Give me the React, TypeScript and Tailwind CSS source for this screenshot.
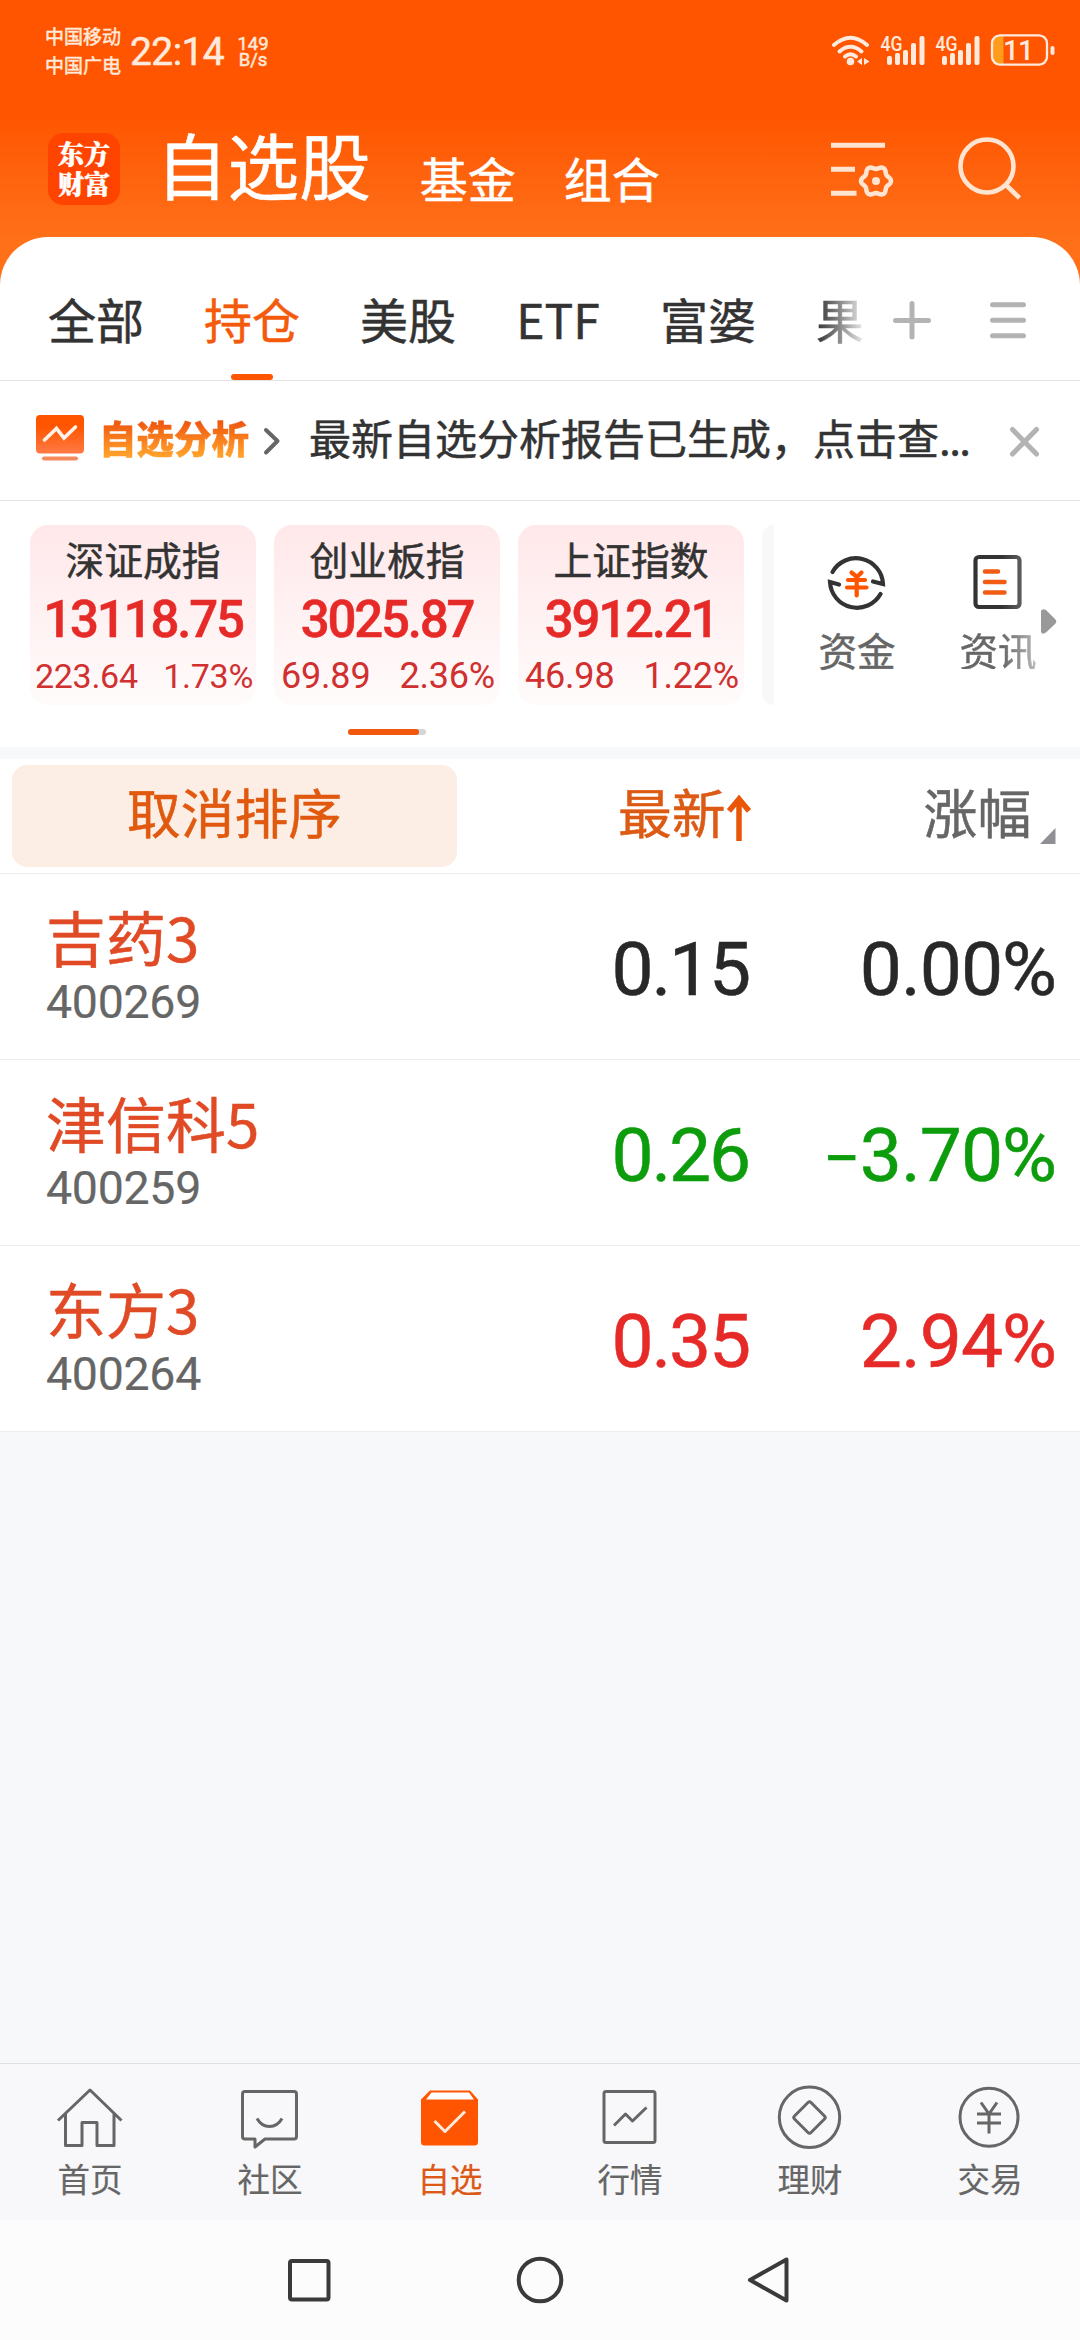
import type { ReactNode } from "react";

interface IndexCard {
  name: string;
  value: string;
  change: string;
  percent: string;
  detailClass: string;
}

interface Stock {
  name: string;
  code: string;
  price: string;
  sign?: string;
  percent: string;
  color: string;
}

interface NavItem {
  label: string;
  icon: ReactNode;
  active?: boolean;
}

const indexes: IndexCard[] = [
  { name: "深证成指", value: "13118.75", change: "223.64", percent: "1.73%", detailClass: "text-[34px] tracking-[-0.3px] pl-[5px] pr-[3px]" },
  { name: "创业板指", value: "3025.87", change: "69.89", percent: "2.36%", detailClass: "text-[36px] tracking-[-0.2px] pl-[7px] pr-[5px]" },
  { name: "上证指数", value: "3912.21", change: "46.98", percent: "1.22%", detailClass: "text-[36px] tracking-[-0.2px] pl-[7px] pr-[5px]" },
];

const stocks: Stock[] = [
  { name: "吉药3", code: "400269", price: "0.15", percent: "0.00%", color: "text-[#282828]" },
  { name: "津信科5", code: "400259", price: "0.26", sign: "−", percent: "3.70%", color: "text-[#0c9c0c]" },
  { name: "东方3", code: "400264", price: "0.35", percent: "2.94%", color: "text-[#e62a28]" },
];

const tabs = ["全部", "持仓", "美股", "ETF", "富婆"];

const navItems: NavItem[] = [
  {
    label: "首页",
    icon: (
      <path d="M4 39.5 L36 9 L67.500 39.500 M11.500 33 V64.500 H28 V41.500 H43 V64.500 H60 V33" />
    ),
  },
  {
    label: "社区",
    icon: (
      <>
        <path d="M11 10.500 H60 Q62.500 10.500 62.500 13 V55.500 Q62.500 58 60 58 H31 L21 66 V58 H11 Q8.500 58 8.500 55.500 V13 Q8.500 10.500 11 10.500 Z" />
        <path d="M23 37.500 Q27.500 45.500 35.500 45.500 T48 37.500" />
      </>
    ),
  },
  {
    label: "自选",
    active: true,
    icon: (
      <>
        <path d="M16 9.500 H56 L64 18.500 V61 Q64 64.500 60.500 64.500 H10.500 Q7 64.500 7 61 V18.500 Z" fill="#ff5500" stroke="none" />
        <path d="M17.500 11.500 H55 L60 18.500 H12 Z" fill="#fff" stroke="none" />
        <path d="M20.500 40 L31 50.500 L51 30.500" stroke="#ffeadd" />
      </>
    ),
  },
  {
    label: "行情",
    icon: (
      <>
        <rect x="10" y="10.500" width="51" height="51" rx="2" />
        <path d="M20 44.500 L31.500 33 L38.500 40 L52.500 26.500" />
      </>
    ),
  },
  {
    label: "理财",
    icon: (
      <>
        <circle cx="35.500" cy="36.300" r="30.200" />
        <path d="M34 21.500 Q35.500 20 37 21.500 L50.500 35 Q52 36.500 50.500 38 L37 51.500 Q35.500 53 34 51.500 L20.500 38 Q19 36.500 20.500 35 Z" />
      </>
    ),
  },
  {
    label: "交易",
    icon: (
      <>
        <circle cx="35" cy="36.300" r="29" />
        <path d="M27 21.500 L35 33 L43 21.500 M35 32 V52.500 M23 33 H47 M23 42 H47" />
      </>
    ),
  },
];

// six-lobed outline of the settings gear
const gearPoints = Array.from({ length: 72 }, (_, i) => {
  const angle = (i * Math.PI) / 36;
  const radius = 13.5 + 1.5 * Math.cos(6 * angle);
  return `${(45 + radius * Math.cos(angle)).toFixed(2)},${(48 + radius * Math.sin(angle)).toFixed(2)}`;
}).join(" ");

function Signal() {
  return (
    <svg width="46" height="32" viewBox="0 0 46 32" fill="#ffeadd">
      <text x="0.500" y="17" fontSize="20" fontWeight="500" textLength="22" lengthAdjust="spacingAndGlyphs">4G</text>
      <rect x="7" y="22" width="5" height="9" rx="2" />
      <rect x="15" y="19" width="5" height="12" rx="2" />
      <rect x="23" y="16" width="5" height="15" rx="2" />
      <rect x="31" y="9" width="5" height="22" rx="2" />
      <rect x="39.500" y="2" width="5" height="29" rx="2" />
    </svg>
  );
}

function StatusBar() {
  return (
    <div className="flex h-[102px] pl-[45px] text-[#ffeadd]">
      <div className="w-[78px] pt-[21px] text-[19px] leading-[29px]">
        <p>中国移动</p>
        <p>中国广电</p>
      </div>
      <p className="ml-[7px] w-[98px] pt-[32px] font-[Roboto,sans-serif] text-[39px] leading-[40px] tracking-[-0.6px]">22:14</p>
      <div className="ml-[8px] w-[34px] pt-[36px] text-center font-[Roboto,sans-serif] text-[18.500px] leading-[16px]">
        <p>149</p>
        <p>B/s</p>
      </div>
      <div className="ml-auto flex h-[32px] pr-[25px] mt-[34px] font-[Roboto,sans-serif] [-webkit-text-stroke:0px]">
        <svg width="40" height="32" viewBox="0 0 40 32" fill="none" stroke="#ffeadd" strokeWidth="4" strokeLinecap="round">
          <path d="M3 11 Q19.500 -3.500 36 11" />
          <path d="M8.500 17.500 Q19.500 8 30.500 17.500" />
          <path d="M14 22.500 Q19.500 18 25 22.500" />
          <circle cx="19.500" cy="27.500" r="3.800" fill="#ffeadd" stroke="none" />
          <path d="M31 24 V31 L26 27.500 Z M33 24 V31 L38.500 27.500 Z" fill="#ffeadd" stroke="none" />
        </svg>
        <div className="ml-[9px] flex gap-[9px]">
          <Signal />
          <Signal />
        </div>
        <svg className="ml-[9px]" width="65" height="32" viewBox="0 0 65 32">
          <path d="M10 2 H13.500 V30 H10 Q3 30 3 23 V9 Q3 2 10 2 Z" fill="#ff9c1c" />
          <rect x="2" y="1.300" width="55" height="29.400" rx="8" fill="none" stroke="#ffeadd" strokeWidth="2.300" />
          <rect x="60.500" y="12" width="4" height="9" rx="2" fill="#ffeadd" />
          <text x="13" y="26" fontSize="28" fontWeight="500" fill="#ffeadd" textLength="31">11</text>
        </svg>
      </div>
    </div>
  );
}

function AppBar() {
  return (
    <div className="flex h-[135px] pl-[48px] text-white">
      <div className="mt-[31px] h-[72px] w-[72px] rounded-[15px] bg-[#ff4400] pt-[5px] text-center font-['Noto_Serif_CJK_SC','Noto_Sans_CJK_SC',sans-serif] text-[26px] leading-[30px] font-black">
        <p>东方</p>
        <p>财富</p>
      </div>
      <h1 className="ml-[36px] mt-[25px] text-[71.600px] leading-[72px]">自选股</h1>
      <span className="ml-[49px] mt-[50px] text-[48px] leading-[50px]">基金</span>
      <span className="ml-[48px] mt-[50px] text-[48px] leading-[50px]">组合</span>
      <svg className="ml-auto mt-[31px]" width="66" height="70" viewBox="0 0 66 70" fill="none" stroke="#ffe4d2" strokeWidth="5">
        <path d="M0 12.200 H54 M0 36.200 H24 M0 60.200 H25.500" />
        <polygon points={gearPoints} strokeWidth="4.500" strokeLinejoin="round" />
        <circle cx="45" cy="48" r="4" fill="#ffe4d2" stroke="none" />
      </svg>
      <svg className="ml-[60px] mr-[57px] mt-[34px]" width="66" height="66" viewBox="0 0 66 66" fill="none" stroke="#ffe4d2" strokeWidth="4.600">
        <circle cx="30" cy="30" r="26.500" />
        <path d="M49 49 L62.500 62" />
      </svg>
    </div>
  );
}

function GroupTabs() {
  return (
    <div className="flex h-[144px] border-b border-[#e2e2e2] text-[#333]">
      <div className="flex w-[864px] gap-[60px] overflow-hidden pl-[48px] text-[48px] leading-[50px] whitespace-nowrap">
        {tabs.map((tab) => (
          <div key={tab} className="flex flex-col items-center pt-[56px]">
            <span className={tab === "持仓" ? "text-[#f45a0c]" : tab === "ETF" ? "w-[84px] text-center" : ""}>{tab}</span>
            {tab === "持仓" && <span className="mt-[31px] h-[6px] w-[42px] shrink-0 rounded-full bg-[#ff5500]" />}
          </div>
        ))}
        <span className="mt-[56px] bg-linear-to-r from-[#333] to-[#eee] bg-clip-text text-transparent">果</span>
      </div>
      <svg className="ml-[28px] mt-[63px]" width="40" height="40" viewBox="0 0 40 40" stroke="#b3b3b3" strokeWidth="5" strokeLinecap="round">
        <path d="M3.500 20.500 H36.500 M20 3.500 V37" />
      </svg>
      <svg className="ml-[56px] mt-[63px]" width="40" height="40" viewBox="0 0 40 40" stroke="#b3b3b3" strokeWidth="5" strokeLinecap="round">
        <path d="M4.500 4.700 H35.500 M4.500 20.300 H35.500 M4.500 35.700 H35.500" />
      </svg>
    </div>
  );
}

function AnalysisBanner() {
  return (
    <div className="flex h-[120px] items-start border-b border-[#e2e2e2] pl-[36px]">
      <svg className="mt-[34px]" width="48" height="46" viewBox="0 0 48 46" fill="none">
        <defs>
          <linearGradient id="screen" x1="0" y1="0" x2="0" y2="1">
            <stop offset="0.3" stopColor="#ff5500" />
            <stop offset="1" stopColor="#ff7a45" />
          </linearGradient>
        </defs>
        <rect width="48" height="38.500" rx="4" fill="url(#screen)" />
        <path d="M8.500 25 L20.500 13.500 L28 23 L39.500 12" stroke="#fff3ea" strokeWidth="3.600" strokeLinecap="round" />
        <rect x="6" y="41.500" width="36" height="4" rx="2" fill="#f58a5c" />
      </svg>
      <span className="ml-[15px] mt-[34px] bg-linear-to-b from-[#f05a10] from-20% to-[#ff9f2a] to-90% bg-clip-text text-[37.500px] leading-[44px] font-black text-transparent">自选分析</span>
      <svg className="ml-[13px] mt-[45px]" width="20" height="30" viewBox="0 0 20 30" fill="none" stroke="#666" strokeWidth="4" strokeLinecap="round" strokeLinejoin="round">
        <path d="M4 4 L15.500 15 L4 26.500" />
      </svg>
      <p className="ml-[27px] mt-[34px] w-[664px] text-[42px] leading-[44px] whitespace-nowrap text-[#333]">
        最新自选分析报告已生成，点击查<span className="tracking-[-1.5px]">...</span>
      </p>
      <svg className="ml-[35px] mt-[44px]" width="34" height="34" viewBox="0 0 34 34" stroke="#b3b3b3" strokeWidth="5" strokeLinecap="round">
        <path d="M4.500 4.500 L28.500 29 M28.500 4.500 L4.500 29" />
      </svg>
    </div>
  );
}

function IndexPanel() {
  return (
    <div className="relative flex h-[246px] pt-[24px] pl-[30px]">
      <div className="flex gap-[18px]">
        {indexes.map((item) => (
          <div key={item.name} className="h-[180px] w-[226px] rounded-[18px] bg-linear-to-b from-[#ffe8ea] to-[#fffbfb]">
            <p className="pt-[13px] text-center text-[38.800px] leading-[40px] text-[#333]">{item.name}</p>
            <p className="mt-[16px] text-center font-[Roboto,sans-serif] text-[51px] leading-[52px] font-medium tracking-[-2.2px] text-[#e62a28]">{item.value}</p>
            <div className="mt-[10px]">
              <p className={`flex justify-between font-[Roboto,sans-serif] leading-[40px] text-[#d03030] [-webkit-text-stroke:0px] ${item.detailClass}`}>
                <span>{item.change}</span>
                <span>{item.percent}</span>
              </p>
            </div>
          </div>
        ))}
        <div className="h-[180px] w-[12px] rounded-l-[12px] bg-[#f7f8fa]" />
      </div>
      <div className="ml-[44px] flex w-[78px] flex-col items-center">
        <svg className="mt-[26px]" width="60" height="60" viewBox="0 0 60 60" fill="none" stroke="#333" strokeWidth="4.200" strokeLinecap="round">
          <path d="M5.500 21 A27 27 0 0 1 56 33 L46 30.500" />
          <path d="M53.500 43 A27 27 0 0 1 3 31 L12 33.500" />
          <path d="M24.500 21.500 L30 26 L34.500 21.500 M21 29 H38 M20 36.500 H39.500 M29.700 26 V44.500" stroke="#ff5500" />
        </svg>
        <span className="mt-[18px] text-[38.500px] leading-[40px] text-[#666]">资金</span>
      </div>
      <div className="ml-[63px] flex w-[78px] flex-col items-center">
        <svg className="mt-[26px]" width="60" height="60" viewBox="0 0 60 60" fill="none" strokeLinecap="round">
          <defs>
            <linearGradient id="page" x1="0" y1="0" x2="1" y2="0">
              <stop offset="0.6" stopColor="#333" />
              <stop offset="1" stopColor="#5a5a5a" />
            </linearGradient>
          </defs>
          <rect x="7.500" y="6" width="44" height="50" rx="3.500" stroke="url(#page)" strokeWidth="4.200" />
          <path d="M17 20.500 H30 M17 31 H36.500 M17 41.500 H36.500" stroke="#f05c14" strokeWidth="4.500" />
        </svg>
        <span className="mt-[18px] bg-linear-to-r from-[#666] from-55% to-[#bbb] bg-clip-text text-[38.500px] leading-[40px] text-transparent">资讯</span>
      </div>
      <svg className="ml-[4px] mt-[84px]" width="16" height="25" viewBox="0 0 16 25" fill="#999">
        <path d="M0 2 Q1 -1 5 1 L14 10 Q16.500 12.500 14 15 L5 23.500 Q1 26 0 23 Z" />
      </svg>
      {/* scroll position of the index cards */}
      <div className="absolute bottom-[12px] left-[348px] h-[6px] w-[78px] rounded-full bg-[#d3d6d9]">
        <div className="h-full w-[71px] rounded-full bg-[#f0580e]" />
      </div>
    </div>
  );
}

function ListHeader() {
  return (
    <div className="flex h-[115px] items-start border-b border-[#ececec] pt-[6px] pl-[12px] text-[53.800px] leading-[56px]">
      <div className="h-[102px] w-[445px] rounded-[15px] bg-[#fdeee5] pt-[18px] text-center text-[#e0590e]">取消排序</div>
      <div className="mt-[18px] ml-[161px] flex text-[#dd5a14]">
        最新
        <svg className="mt-[11px] ml-[1px]" width="24" height="48" viewBox="0 0 24 48" fill="none" stroke="#ea5608" strokeWidth="5.500">
          <path d="M12 4 V47 M2 17 L12 5 L22 17" />
          <path d="M12 1 L4 12 H20 Z" fill="#ea5608" stroke="none" />
        </svg>
      </div>
      <span className="mt-[18px] ml-[173px] text-[#666]">涨幅</span>
      <svg className="mt-[63px] ml-[9px]" width="16" height="16" viewBox="0 0 16 16" fill="#8f8f96">
        <path d="M15.500 0 V16 H0 Z" />
      </svg>
    </div>
  );
}

function StockRow({ stock }: { stock: Stock }) {
  return (
    <div className="flex h-[186px] border-b border-[#ececec] pr-[24px] pl-[46px]">
      <div className="w-[400px]">
        <p className="mt-[31px] text-[60px] leading-[62px] text-[#e04a25]">{stock.name}</p>
        <p className="mt-[11px] font-[Roboto,sans-serif] text-[46.500px] leading-[48px] tracking-[-0.3px] text-[#666] [-webkit-text-stroke:0.2px]">{stock.code}</p>
      </div>
      <p className={`w-[303px] pt-[55px] text-right font-[Roboto,sans-serif] text-[75px] leading-[80px] tracking-[-2.2px] ${stock.color}`}>{stock.price}</p>
      <p className={`ml-auto pt-[55px] text-right font-[Roboto,sans-serif] text-[75px] leading-[80px] tracking-[-1px] ${stock.color}`}>
        {stock.sign && <span className="text-[66px]">{stock.sign}</span>}
        {stock.percent}
      </p>
    </div>
  );
}

function BottomNav() {
  return (
    <div className="grid h-[157px] grid-cols-6 border-t border-[#e0e0e2] bg-[#f8f8fa] [-webkit-text-stroke:0.2px]">
      {navItems.map((item) => (
        <div key={item.label} className="flex flex-col items-center pt-[17px]">
          <svg width="72" height="72" viewBox="0 0 72 72" fill="none" stroke="#666" strokeWidth="3" strokeLinejoin="round">
            {item.icon}
          </svg>
          <span className={item.active ? "mt-[8px] text-[32.500px] leading-[34px] text-[#dc5a18]" : "mt-[8px] text-[32.500px] leading-[34px] text-[#666]"}>{item.label}</span>
        </div>
      ))}
    </div>
  );
}

function SystemNav() {
  return (
    <div className="flex h-[120px] items-center justify-center gap-[181px] bg-[#fcfcfc]">
      <svg width="48" height="48" viewBox="0 0 48 48" fill="none" stroke="#3a3a3a" strokeWidth="4">
        <rect x="3" y="5" width="38.500" height="38.500" rx="2" />
      </svg>
      <svg width="48" height="48" viewBox="0 0 48 48" fill="none" stroke="#3a3a3a" strokeWidth="4">
        <circle cx="24" cy="24" r="21.300" />
      </svg>
      <svg width="48" height="48" viewBox="0 0 48 48" fill="none" stroke="#3a3a3a" strokeWidth="4" strokeLinejoin="round">
        <path d="M41.500 3.500 V44.500 L5 24 Z" />
      </svg>
    </div>
  );
}

export default function App() {
  return (
    <div className="flex h-[2340px] w-[1080px] flex-col overflow-hidden bg-[#f7f8fa] font-['Noto_Sans_CJK_SC',sans-serif] [-webkit-text-stroke:0.5px]">
      <div className="bg-linear-to-b from-[#ff5500] from-[115px] to-[#ff7018] to-[240px]">
        <StatusBar />
        <AppBar />
        <div className="rounded-t-[48px] bg-white">
          <GroupTabs />
          <AnalysisBanner />
          <IndexPanel />
        </div>
      </div>
      <div className="mt-[12px] bg-white">
        <ListHeader />
        {stocks.map((stock) => (
          <StockRow key={stock.code} stock={stock} />
        ))}
      </div>
      <div className="mt-auto">
        <BottomNav />
        <SystemNav />
      </div>
    </div>
  );
}
